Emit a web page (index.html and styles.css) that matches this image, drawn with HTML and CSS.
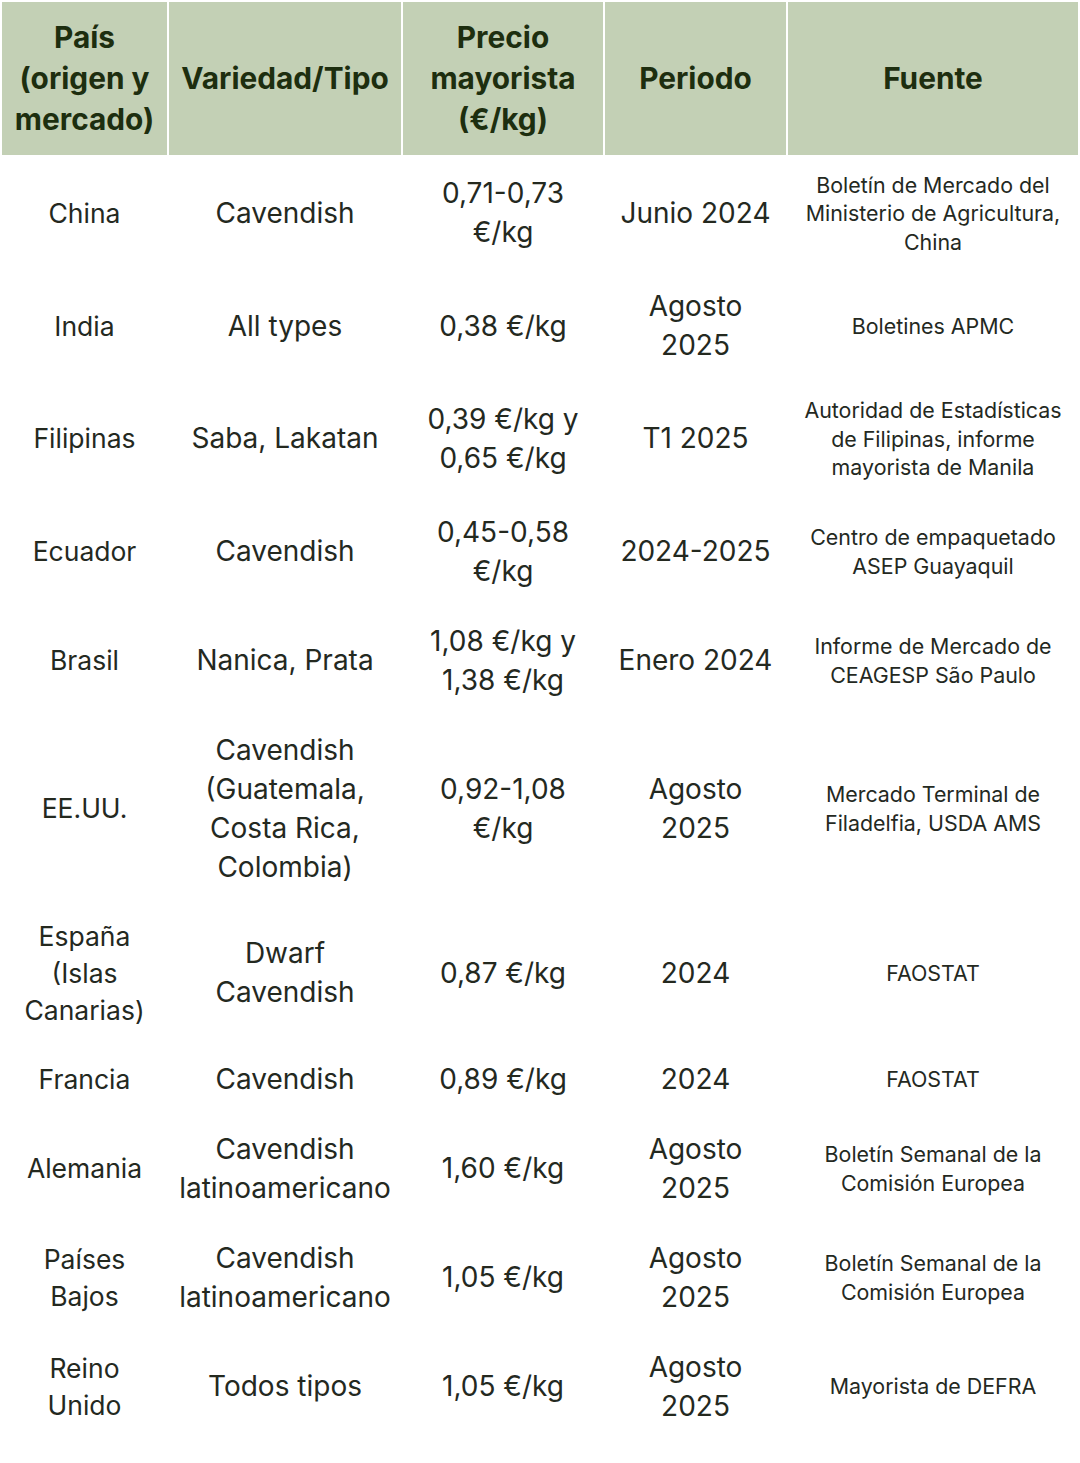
FILE: index.html
```html
<!DOCTYPE html>
<html lang="es">
<head>
<meta charset="utf-8">
<link rel="stylesheet" href="styles.css">
</head>
<body>
<div class="wrap">
<table class="prices">
  <colgroup>
    <col class="c1"><col class="c2"><col class="c3"><col class="c4"><col class="c5">
  </colgroup>
  <thead>
    <tr>
      <th>País<br>(origen y<br>mercado)</th>
      <th>Variedad/Tipo</th>
      <th>Precio<br>mayorista<br>(€/kg)</th>
      <th>Periodo</th>
      <th>Fuente</th>
    </tr>
  </thead>
  <tbody>
    <tr>
      <td class="pais">China</td>
      <td>Cavendish</td>
      <td>0,71-0,73<br>€/kg</td>
      <td>Junio 2024</td>
      <td class="src">Boletín de Mercado del<br>Ministerio de Agricultura,<br>China</td>
    </tr>
    <tr>
      <td class="pais">India</td>
      <td>All types</td>
      <td>0,38 €/kg</td>
      <td>Agosto<br>2025</td>
      <td class="src">Boletines APMC</td>
    </tr>
    <tr>
      <td class="pais">Filipinas</td>
      <td>Saba, Lakatan</td>
      <td>0,39 €/kg y<br>0,65 €/kg</td>
      <td>T1 2025</td>
      <td class="src">Autoridad de Estadísticas<br>de Filipinas, informe<br>mayorista de Manila</td>
    </tr>
    <tr>
      <td class="pais">Ecuador</td>
      <td>Cavendish</td>
      <td>0,45-0,58<br>€/kg</td>
      <td>2024-2025</td>
      <td class="src">Centro de empaquetado<br>ASEP Guayaquil</td>
    </tr>
    <tr>
      <td class="pais">Brasil</td>
      <td>Nanica, Prata</td>
      <td>1,08 €/kg y<br>1,38 €/kg</td>
      <td>Enero 2024</td>
      <td class="src">Informe de Mercado de<br>CEAGESP São Paulo</td>
    </tr>
    <tr>
      <td class="pais">EE.UU.</td>
      <td>Cavendish<br>(Guatemala,<br>Costa Rica,<br>Colombia)</td>
      <td>0,92-1,08<br>€/kg</td>
      <td>Agosto<br>2025</td>
      <td class="src">Mercado Terminal de<br>Filadelfia, USDA AMS</td>
    </tr>
    <tr>
      <td class="pais">España<br>(Islas<br>Canarias)</td>
      <td>Dwarf<br>Cavendish</td>
      <td>0,87 €/kg</td>
      <td>2024</td>
      <td class="src">FAOSTAT</td>
    </tr>
    <tr>
      <td class="pais">Francia</td>
      <td>Cavendish</td>
      <td>0,89 €/kg</td>
      <td>2024</td>
      <td class="src">FAOSTAT</td>
    </tr>
    <tr>
      <td class="pais">Alemania</td>
      <td>Cavendish<br>latinoamericano</td>
      <td>1,60 €/kg</td>
      <td>Agosto<br>2025</td>
      <td class="src">Boletín Semanal de la<br>Comisión Europea</td>
    </tr>
    <tr>
      <td class="pais">Países<br>Bajos</td>
      <td>Cavendish<br>latinoamericano</td>
      <td>1,05 €/kg</td>
      <td>Agosto<br>2025</td>
      <td class="src">Boletín Semanal de la<br>Comisión Europea</td>
    </tr>
    <tr>
      <td class="pais">Reino<br>Unido</td>
      <td>Todos tipos</td>
      <td>1,05 €/kg</td>
      <td>Agosto<br>2025</td>
      <td class="src">Mayorista de DEFRA</td>
    </tr>
  </tbody>
</table>
</div>
</body>
</html>
```

FILE: styles.css
```css
html, body {
  margin: 0;
  padding: 0;
  background: #ffffff;
}

body {
  font-family: Inter, "Liberation Sans", sans-serif;
  color: #24291f;
}

.wrap {
  padding-top: 2px;
  width: 1080px;
}

.prices {
  width: 1080px;
  border-collapse: separate;
  border-spacing: 2px 0;
  table-layout: fixed;
}

.c1 { width: 165px; }
.c2 { width: 232px; }
.c3 { width: 200px; }
.c4 { width: 181px; }
.c5 { width: 290px; }

.prices th {
  background: #c3d0b5;
  color: #1d2e0f;
  font-weight: 700;
  font-size: 29.8px;
  line-height: 41px;
  padding: 15px 2px;
  text-align: center;
  vertical-align: middle;
}

.prices td {
  font-size: 28px;
  line-height: 39px;
  padding: 15.5px 2px;
  text-align: center;
  vertical-align: middle;
  font-weight: 400;
}

.prices td.pais {
  font-size: 26.5px;
  line-height: 37px;
}

.prices td.src {
  font-size: 21.4px;
  line-height: 28.5px;
}
```
